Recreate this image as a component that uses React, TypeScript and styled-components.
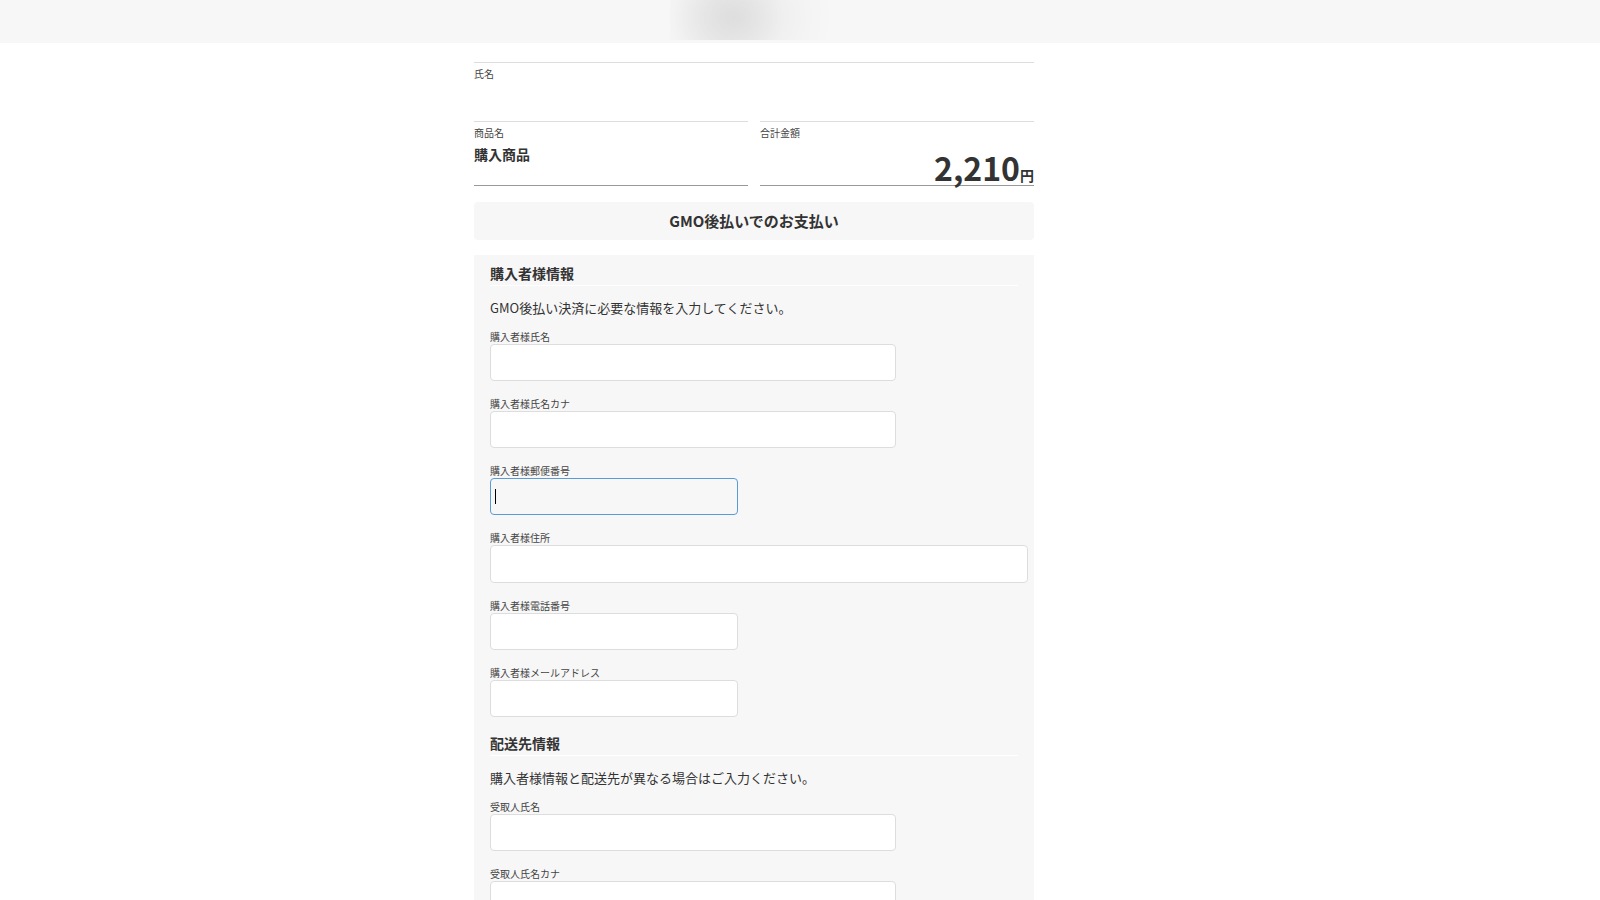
import React, { useId } from "react";
import styled, { createGlobalStyle, css } from "styled-components";

const GlobalStyle = createGlobalStyle`
  body {
    margin: 0;
    background: #fff;
    color: #333;
    font-family: "Noto Sans CJK JP", sans-serif;
    font-size: 13px;
    line-height: 20px;
  }
`;

const Header = styled.header`
  display: flex;
  justify-content: center;
  height: 43px;
  padding-right: 100px;
  background: #f7f7f7;
`;

const Logo = styled.div`
  width: 160px;
  height: 40px;
  background:
    radial-gradient(ellipse 56px 56px at 58px 17px, rgba(0, 0, 0, 0.05), rgba(0, 0, 0, 0.03) 45%, transparent),
    radial-gradient(ellipse 96px 80px at 68px 17px, rgba(0, 0, 0, 0.06), rgba(0, 0, 0, 0.04) 35%, rgba(0, 0, 0, 0.01) 75%, transparent);
`;

const Page = styled.div`
  padding: 19px 92px 0 0;
`;

const Main = styled.main`
  max-width: 560px;
  margin: 0 auto;
`;

const Summary = styled.dl`
  display: grid;
  grid-template-columns: 1fr 1fr;
  column-gap: 12px;
  margin: 0 0 16px;
`;

const SummaryItem = styled.div<{ $full?: boolean }>`
  box-sizing: border-box;
  padding-top: 4px;
  border-top: 1px solid #ddd;
  ${(p) =>
    p.$full
      ? css`
          grid-column: 1 / -1;
          height: 59px;
        `
      : css`
          height: 65px;
          border-bottom: 1px solid #999;
        `}
`;

const Term = styled.dt`
  color: #444;
  font-size: 10px;
  line-height: 14px;
`;

const ProductName = styled.dd`
  margin: 0;
  padding-top: 2px;
  font-size: 14px;
  font-weight: 700;
  line-height: 24px;
`;

const Price = styled.dd`
  margin: 0;
  padding-top: 7px;
  text-align: right;
  font-size: 14px;
  font-weight: 700;
  line-height: 40px;
`;

const Amount = styled.span`
  font-size: 32px;
`;

const MethodTitle = styled.h1`
  margin: 0 0 15px;
  border-radius: 4px;
  background: #f7f7f7;
  text-align: center;
  font-size: 15px;
  font-weight: 700;
  line-height: 38px;
`;

const Panel = styled.form`
  padding: 8px 16px 16px;
  background: #f7f7f7;
`;

const SectionTitle = styled.h2`
  margin: 0 0 12px;
  padding-bottom: 2px;
  border-bottom: 1px solid #fff;
  font-size: 14px;
  font-weight: 700;
  line-height: 20px;
`;

const Lead = styled.p`
  margin: 0 0 12px;
`;

const FieldRow = styled.div`
  margin-bottom: 16px;
`;

const FieldLabel = styled.label`
  display: block;
  color: #444;
  font-size: 10px;
  line-height: 14px;
`;

const InputWrap = styled.div`
  position: relative;
  display: flex;
`;

type Size = "short" | "medium" | "full";
const widths: Record<Size, string> = { short: "45%", medium: "75%", full: "100%" };

const TextInput = styled.input<{ $size: Size; $active?: boolean }>`
  box-sizing: content-box;
  flex: none;
  width: ${(p) => widths[p.$size]};
  height: ${(p) => (p.$size === "full" ? 36 : 35)}px;
  padding: 0 4px;
  border: 1px solid ${(p) => (p.$active ? "#5b9bd5" : "#ddd")};
  border-radius: 4px;
  outline: none;
  background: ${(p) => (p.$active ? "#f7f7f7" : "#fff")};
  caret-color: transparent;
  font: inherit;
`;

const Caret = styled.span`
  position: absolute;
  top: 11px;
  left: 5px;
  width: 1px;
  height: 15px;
  background: #000;
`;

interface FieldProps {
  label: string;
  size: Size;
  type?: string;
  active?: boolean;
}

function Field({ label, size, type = "text", active }: FieldProps) {
  const id = useId();
  return (
    <FieldRow>
      <FieldLabel htmlFor={id}>{label}</FieldLabel>
      <InputWrap>
        <TextInput id={id} type={type} $size={size} $active={active} />
        {active && <Caret aria-hidden="true" />}
      </InputWrap>
    </FieldRow>
  );
}

export default function App() {
  return (
    <>
      <GlobalStyle />
      <Header>
        <Logo />
      </Header>
      <Page>
        <Main>
          <Summary>
            <SummaryItem $full>
              <Term>氏名</Term>
            </SummaryItem>
            <SummaryItem>
              <Term>商品名</Term>
              <ProductName>購入商品</ProductName>
            </SummaryItem>
            <SummaryItem>
              <Term>合計金額</Term>
              <Price>
                <Amount>2,210</Amount>円
              </Price>
            </SummaryItem>
          </Summary>
          <MethodTitle>GMO後払いでのお支払い</MethodTitle>
          <Panel>
            <section>
              <SectionTitle>購入者様情報</SectionTitle>
              <Lead>GMO後払い決済に必要な情報を入力してください。</Lead>
              <Field label="購入者様氏名" size="medium" />
              <Field label="購入者様氏名カナ" size="medium" />
              <Field label="購入者様郵便番号" size="short" active />
              <Field label="購入者様住所" size="full" />
              <Field label="購入者様電話番号" size="short" type="tel" />
              <Field label="購入者様メールアドレス" size="short" type="email" />
            </section>
            <section>
              <SectionTitle>配送先情報</SectionTitle>
              <Lead>購入者様情報と配送先が異なる場合はご入力ください。</Lead>
              <Field label="受取人氏名" size="medium" />
              <Field label="受取人氏名カナ" size="medium" />
            </section>
          </Panel>
        </Main>
      </Page>
    </>
  );
}
